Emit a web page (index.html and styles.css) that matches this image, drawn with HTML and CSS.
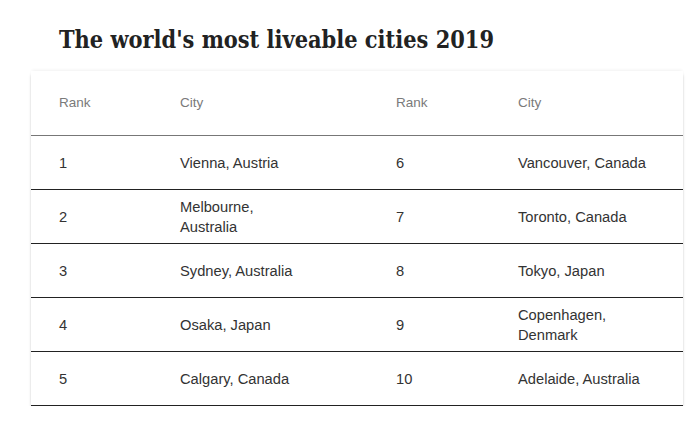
FILE: index.html
```html
<!DOCTYPE html>
<html lang="en">
<head>
<meta charset="utf-8">
<title>The world's most liveable cities 2019</title>
<link rel="stylesheet" href="styles.css">
</head>
<body>
<h1 class="title">The world's most liveable cities 2019</h1>
<div class="card">
  <div class="row head">
    <div class="cell">Rank</div>
    <div class="cell city">City</div>
    <div class="cell">Rank</div>
    <div class="cell city2">City</div>
  </div>
  <div class="row">
    <div class="cell">1</div>
    <div class="cell city">Vienna, Austria</div>
    <div class="cell">6</div>
    <div class="cell city2">Vancouver, Canada</div>
  </div>
  <div class="row">
    <div class="cell">2</div>
    <div class="cell city">Melbourne, Australia</div>
    <div class="cell">7</div>
    <div class="cell city2">Toronto, Canada</div>
  </div>
  <div class="row">
    <div class="cell">3</div>
    <div class="cell city">Sydney, Australia</div>
    <div class="cell">8</div>
    <div class="cell city2">Tokyo, Japan</div>
  </div>
  <div class="row">
    <div class="cell">4</div>
    <div class="cell city">Osaka, Japan</div>
    <div class="cell">9</div>
    <div class="cell city2">Copenhagen, Denmark</div>
  </div>
  <div class="row">
    <div class="cell">5</div>
    <div class="cell city">Calgary, Canada</div>
    <div class="cell">10</div>
    <div class="cell city2">Adelaide, Australia</div>
  </div>
</div>
</body>
</html>
```
FILE: styles.css
```css
html, body {
  margin: 0;
  padding: 0;
  background: #ffffff;
}
body {
  font-family: "Liberation Sans", Arial, sans-serif;
  color: #333333;
}
.title {
  margin: 24px 0 0 59px;
  font-family: "DejaVu Serif Condensed", "DejaVu Serif", serif;
  font-stretch: condensed;
  font-weight: bold;
  font-size: 23.3px;
  line-height: 32px;
  color: #222222;
}
.card {
  margin: 15px 0 0 31px;
  width: 652px;
  background: #ffffff;
  box-shadow: 0 3px 3px -1px rgba(0, 0, 0, 0.4), 0 -2px 3px -1px rgba(0, 0, 0, 0.06);
}
.row {
  display: grid;
  grid-template-columns: 121px 216px 122px 193px;
  align-items: center;
  height: 53px;
  border-bottom: 1px solid #222222;
  font-size: 14.7px;
  line-height: 20px;
}
.row.head {
  height: 64px;
  border-bottom-color: #777777;
  font-size: 13.5px;
  color: #7a7a7a;
}
.cell {
  padding-left: 28px;
}
.city {
  padding-right: 68px;
}
.city2 {
  padding-right: 28px;
}
```
